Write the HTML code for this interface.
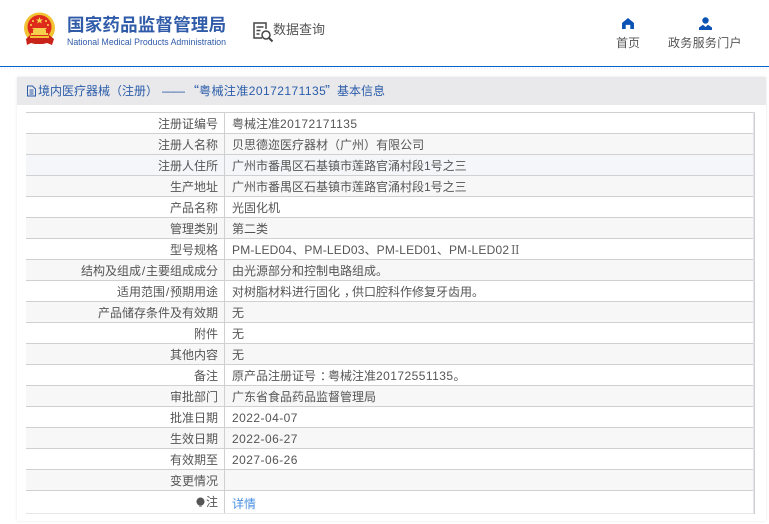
<!DOCTYPE html>
<html lang="zh-CN"><head><meta charset="utf-8"><title>国家药品监督管理局</title>
<style>
html,body{margin:0;padding:0;width:769px;height:524px;overflow:hidden;background:#fff}
body{position:relative;font-family:"Liberation Sans","Noto Sans CJK SC",sans-serif;color:#555}
.abs{position:absolute;white-space:nowrap}
.line{position:absolute;left:0;top:66px;width:769px;height:1px;background:#0066cc}
.dots{position:absolute;left:0;top:67px;width:769px;height:4px;background-image:radial-gradient(#e6e6e6 0.7px,transparent 0.8px);background-size:3px 3px}
.panel{position:absolute;left:17px;top:77px;width:749px;height:444px;background:#fff;box-shadow:0 0 3px rgba(0,0,0,.09)}
.head{position:absolute;left:0;top:0;width:100%;height:28px;background:#e9e9eb;color:#2a5caa;font-size:12px;line-height:28px;white-space:nowrap}
.head span{position:absolute;top:0}
.tbl{position:absolute;left:26px;top:112px;width:727px}
.r{position:absolute;left:0;width:727px;height:20px;border-top:1px solid #d0d0d0;font-size:12px;line-height:20px;color:#555}
.r.g{background:#f7f7f7}
.r b{font-weight:normal;position:absolute;right:535px;top:1px;white-space:nowrap}
.r i{font-style:normal;position:absolute;left:206px;top:1px;white-space:nowrap}
.r::after{content:"";position:absolute;left:198px;top:0;bottom:0;width:1px;background:#d0d0d0}
.side{position:absolute;left:753px;top:112px;width:1px;height:402px;background:#e4e4ea;border-right:1px solid #cfcfd6}
.n{letter-spacing:.45px}
.m{letter-spacing:.2px}
.p{font-family:"Noto Sans CJK TC",sans-serif}
.s{margin:0 .8px}
.c{position:relative;left:4px}
</style></head><body>
<svg class="abs" style="left:23px;top:12px" width="34" height="35" viewBox="0 0 34 35">
<circle cx="16.500" cy="16" r="15.500" fill="#f1c232"/><circle cx="16.500" cy="15" r="12" fill="#dd2a1c"/>
<path d="M3 27l4-4 4 3h11l4-3 5 4-2 6-5-2-4 1h-8l-4-1-4 2z" fill="#c9241a"/>
<path d="M8 21h17v2H8zM10 18h13v3H10zM9 16h15l-2 2H11z" fill="#f5d04d"/>
<path d="M7 24h19v2H7z" fill="#f1c232"/>
<path d="M16.500 5l1 2.500h2.500l-2 1.500.8 2.500-2.300-1.500-2.300 1.500.8-2.500-2-1.500H15.500z" fill="#f7d64a"/>
<circle cx="10" cy="9" r="1" fill="#f7d64a"/><circle cx="23" cy="9" r="1" fill="#f7d64a"/><circle cx="8" cy="13" r="1" fill="#f7d64a"/><circle cx="25" cy="13" r="1" fill="#f7d64a"/>
</svg>
<div class="abs" style="left:67px;top:14px;font-size:17.500px;font-weight:bold;line-height:22px;color:#2f5ba8;letter-spacing:0.200px">国家药品监督管理局</div>
<div class="abs" style="left:67px;top:36px;font-size:8.750px;line-height:12px;color:#2f5ba8">National Medical Products Administration</div>
<svg class="abs" style="left:252px;top:21px" width="22" height="22" viewBox="0 0 22 22" fill="none" stroke="#444" stroke-width="1.500">
<path d="M10 17H2V2h12v6"/><path d="M4.500 6h7M4.500 9.500h4M4.500 13h3"/><circle cx="14" cy="14" r="4"/><path d="M17 17l3.500 3.500" stroke-width="2"/>
</svg>
<div class="abs" style="left:273px;top:20px;font-size:13px;line-height:20px;color:#555">数据查询</div>
<svg class="abs" style="left:622px;top:18px" width="12" height="11" viewBox="0 0 13 12"><path d="M6.500 0L13 5.500V12H9V7.500H4V12H0V5.500z" fill="#0b52b5"/></svg>
<svg class="abs" style="left:699px;top:17px" width="13" height="13" viewBox="0 0 13 13"><circle cx="6.500" cy="3.500" r="3.200" fill="#0b52b5"/><path d="M0 13V10.500L4 7.800 6.500 10 9 7.800l4 2.700V13z" fill="#0b52b5"/></svg>
<div class="abs" style="left:616px;top:35px;font-size:12px;line-height:17px;color:#555">首页</div>
<div class="abs" style="left:668px;top:35px;font-size:12px;line-height:17px;color:#555;letter-spacing:.3px">政务服务门户</div>
<div class="line"></div><div class="dots"></div>
<div class="panel"><div class="head">
<span style="left:21px">境内医疗器械</span><span class="p" style="left:93px">（</span><span style="left:105px">注册</span><span class="p" style="left:129px">）</span><span style="left:145px;letter-spacing:-1px">——</span><span class="p" style="left:170px">“</span><span class="n" style="left:182px">粤械注准20172171135</span><span class="p" style="left:308px">”</span><span style="left:320px">基本信息</span>
<svg style="position:absolute;left:9px;top:8px" width="11" height="12" viewBox="0 0 11 12" fill="none" stroke="#2a5caa"><path d="M1.500 1h5l3 3v7h-8zM3.500 5h4M3.500 7h4M3.500 9h4"/></svg></div></div>
<div class="tbl">
<div class="r" style="top:0"><b>注册证编号</b><i>粤械注准<span class="n">20172171135</span></i></div>
<div class="r g" style="top:21px"><b>注册人名称</b><i>贝思德迩医疗器材<span class="p">（</span>广州<span class="p">）</span>有限公司</i></div>
<div class="r" style="top:42px;background:#f5f6fa"><b>注册人住所</b><i>广州市番禺区石基镇市莲路官涌村段1号之三</i></div>
<div class="r g" style="top:63px"><b>生产地址</b><i>广州市番禺区石基镇市莲路官涌村段1号之三</i></div>
<div class="r" style="top:84px"><b>产品名称</b><i>光固化机</i></div>
<div class="r g" style="top:105px"><b>管理类别</b><i>第二类</i></div>
<div class="r" style="top:126px"><b>型号规格</b><i><span class="m">PM-LED04</span>、<span class="m">PM-LED03</span>、<span class="m">PM-LED01</span>、<span class="m">PM-LED02</span><span style="font-family:'Noto Serif CJK SC',serif">Ⅱ</span></i></div>
<div class="r g" style="top:147px"><b>结构及组成<span class="s">/</span>主要组成成分</b><i>由光源部分和控制电路组成。</i></div>
<div class="r" style="top:168px"><b>适用范围<span class="s">/</span>预期用途</b><i>对树脂材料进行固化<span class="c">，</span>供口腔科作修复牙齿用。</i></div>
<div class="r g" style="top:189px"><b>产品储存条件及有效期</b><i>无</i></div>
<div class="r" style="top:210px"><b>附件</b><i>无</i></div>
<div class="r g" style="top:231px"><b>其他内容</b><i>无</i></div>
<div class="r" style="top:252px"><b>备注</b><i>原产品注册证号<span class="c">：</span>粤械注准<span class="n">20172551135</span>。</i></div>
<div class="r g" style="top:273px"><b>审批部门</b><i>广东省食品药品监督管理局</i></div>
<div class="r" style="top:294px"><b>批准日期</b><i class="n">2022-04-07</i></div>
<div class="r g" style="top:315px"><b>生效日期</b><i class="n">2022-06-27</i></div>
<div class="r" style="top:336px"><b>有效期至</b><i class="n">2027-06-26</i></div>
<div class="r g" style="top:357px"><b>变更情况</b><i></i></div>
<div class="r" style="top:378px;height:22px;border-bottom:1px solid #e6e6e6"><b>注</b><i style="color:#4a90e2;top:3px">详情</i>
<svg style="position:absolute;left:170px;top:6px" width="9" height="11" viewBox="0 0 10 11"><circle cx="5" cy="4.500" r="4.500" fill="#555"/><path d="M3.500 9h3v1.500h-3z" fill="#999"/></svg></div>
</div>
<div class="side"></div>
</body></html>
